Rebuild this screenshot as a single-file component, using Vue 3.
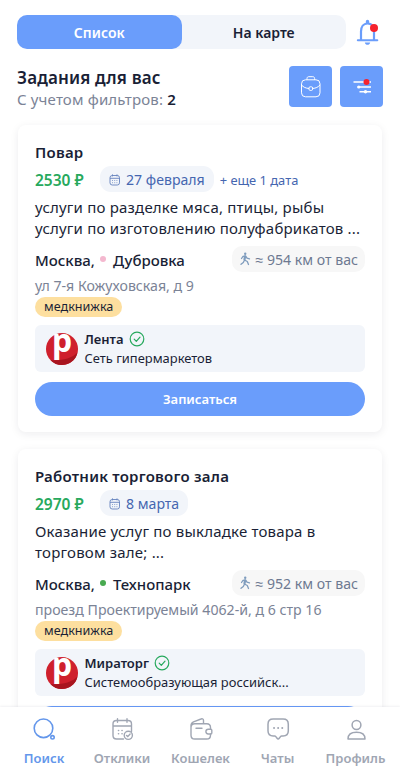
<script setup>
const jobs = [
  {
    title: 'Повар', pay: '2530 ₽', date: '27 февраля', more: '+ еще 1 дата',
    lines: ['услуги по разделке мяса, птицы, рыбы', 'услуги по изготовлению полуфабрикатов ...'],
    metro: 'Дубровка', line: 'pink', distance: '≈ 954 км от вас', address: 'ул 7-я Кожуховская, д 9',
    company: 'Лента', about: 'Сеть гипермаркетов',
  },
  {
    title: 'Работник торгового зала', pay: '2970 ₽', date: '8 марта', more: '',
    lines: ['Оказание услуг по выкладке товара в', 'торговом зале; ...'],
    metro: 'Технопарк', line: 'green', distance: '≈ 952 км от вас', address: 'проезд Проектируемый 4062-й, д 6 стр 16',
    company: 'Мираторг', about: 'Системообразующая российск...',
  },
]
</script>

<template>
  <div class="screen">
    <header class="top">
      <div class="switch">
        <button class="seg on">Список</button>
        <button class="seg">На карте</button>
      </div>
      <svg class="bell" width="24" height="28" viewBox="0 0 24 28" fill="none">
        <path d="M5 21V12.500C5 7.500 7.500 4.500 11.500 4.500S18 7.500 18 12.500V21" stroke="#6a9dfb" stroke-width="2.200" />
        <path d="M1.800 21.300H21.300" stroke="#6a9dfb" stroke-width="2" stroke-linecap="round" />
        <path d="M9.800 4.500V2.500a1.700 1.700 0 0 1 3.400 0V4.500zM8.800 23.500h5.400c-.3 1.400-1.400 2.300-2.700 2.300s-2.400-.9-2.700-2.300z" fill="#6a9dfb" />
        <circle cx="18" cy="9" r="4" fill="#f5222d" />
      </svg>
    </header>

    <section class="head">
      <div class="headings">
        <h1>Задания для вас</h1>
        <p>С учетом фильтров: <b>2</b></p>
      </div>
      <button class="tool">
        <svg width="22" height="24" viewBox="0 0 22 24" fill="none" stroke="#fff" stroke-width="1">
          <rect x="1.500" y="4.800" width="18.500" height="17" rx="4" />
          <path d="M7 4.800V3.500C7 2.300 7.700 1.700 8.800 1.700h4c1.100 0 1.800.6 1.800 1.800V4.800M1.500 10c2 2.200 4 3.200 7.500 3.500M20 10c-2 2.200-4 3.200-7.500 3.500" />
          <rect x="9" y="11.800" width="3.600" height="3.600" rx="1.200" />
        </svg>
      </button>
      <button class="tool">
        <svg width="20" height="20" viewBox="0 0 20 20" fill="none">
          <path d="M1.500 5H19M5.500 10H19M7.500 14.700H19" stroke="#fff" stroke-width="1.500" />
          <circle cx="6.800" cy="10" r="1.600" fill="#fff" />
          <circle cx="13.500" cy="14.700" r="1.700" fill="#fff" />
          <circle cx="14.500" cy="4.900" r="3" fill="#f5222d" />
        </svg>
      </button>
    </section>

    <main class="list">
      <article v-for="job in jobs" :key="job.title" class="card">
        <h2>{{ job.title }}</h2>
        <div class="payrow">
          <span class="pay">{{ job.pay }}</span>
          <span class="date">
            <svg width="12" height="12" viewBox="0 0 12 12" fill="none" stroke="#6482bd" stroke-width=".9">
              <rect x="1" y="1.500" width="9.500" height="9.500" rx="2.200" />
              <path d="M1 4.300h9.500M3.500.4v2M8 .4v2" />
              <path d="M3 6.500h6M3 8.700h6" stroke-width=".7" stroke-dasharray="1 1.200" />
            </svg>
            {{ job.date }}
          </span>
          <span v-if="job.more" class="more">{{ job.more }}</span>
        </div>
        <div class="desc"><p v-for="l in job.lines" :key="l">{{ l }}</p></div>
        <div class="place">
          <span class="city">Москва,</span><i class="dot" :class="job.line"></i><span class="city">{{ job.metro }}</span>
          <span class="dist">
            <svg width="11" height="14" viewBox="0 0 11 14" fill="none" stroke="#7f9cbd" stroke-width="1.300" stroke-linecap="round" stroke-linejoin="round">
              <circle cx="5.200" cy="1.700" r="1.200" fill="#7f9cbd" stroke="none" />
              <path d="M1.500 6.500 3 4.300 5.700 4 7 6.200l2.500.6M5.500 4.300 4.500 8l2.800 1.500 1.200 3M4.300 8.500 3.300 10.500 1 12.300" />
              <path d="M4.900 4.500 4.400 7.500" stroke-width="2" />
            </svg>
            {{ job.distance }}
          </span>
        </div>
        <p class="address">{{ job.address }}</p>
        <span class="tag">медкнижка</span>
        <div class="company">
          <svg class="logo" width="32" height="32" viewBox="0 0 32 32">
            <circle cx="16" cy="16" r="16" fill="#cf202d" />
            <path d="M4.500 27.200C15 28 26 25.500 31.500 19.500A16 16 0 0 1 4.500 27.200z" fill="#a8151f" />
            <text x="16.200" y="19.400" text-anchor="middle" fill="#fff">p</text>
          </svg>
          <div class="info">
            <div class="name">
              <strong>{{ job.company }}</strong>
              <svg width="16" height="16" viewBox="0 0 16 16" fill="none" stroke="#27a95d" stroke-width="1.200" stroke-linecap="round" stroke-linejoin="round">
                <circle cx="8" cy="8" r="6.800" /><path d="m5.200 8.200 2.100 2.100L11 6.100" />
              </svg>
            </div>
            <div class="about">{{ job.about }}</div>
          </div>
        </div>
        <button class="apply">Записаться</button>
      </article>
    </main>

    <nav class="tabs">
      <a class="tab active">
        <svg width="26" height="26" viewBox="0 0 26 26" fill="none" stroke="#6497eb" stroke-width="1.600">
          <circle cx="12.500" cy="12.300" r="9.300" /><circle cx="21.500" cy="21.300" r="1.700" />
        </svg>
        <span>Поиск</span>
      </a>
      <a class="tab">
        <svg width="26" height="26" viewBox="0 0 26 26" fill="none" stroke="#a0a6b3" stroke-width="1.400" stroke-linecap="round">
          <path d="M14.500 23H7.500c-2.300 0-3.500-1.200-3.500-3.500V8C4 5.700 5.200 4.500 7.500 4.500h11.500c2.300 0 3.500 1.200 3.500 3.500v7.500M4 10h18.500M8.500 2.800v3.400M18 2.800v3.400" />
          <path d="M9.500 14.500h.1M13 14.500h.1M9.500 17.700h.1M13 17.700h.1" stroke-width="1.600" />
          <circle cx="19.300" cy="19.300" r="4.100" /><path d="m17.500 19.400 1.300 1.200 2.300-2.600" />
        </svg>
        <span>Отклики</span>
      </a>
      <a class="tab">
        <svg width="26" height="26" viewBox="0 0 26 26" fill="none" stroke="#a0a6b3" stroke-width="1.400" stroke-linecap="round" stroke-linejoin="round">
          <path d="M22.500 13.200v-1.700c0-2.500-1.300-3.800-3.800-3.800H6.800C4.300 7.700 3 9 3 11.500v7.700C3 21.700 4.300 23 6.800 23h11.900c2.500 0 3.800-1.300 3.800-3.800v-1.200M3 11.200V9.500c0-2 .8-3 2.500-3.700L13 3c1.500-.6 2.500.1 2.500 1.600v3M8 12.200h6" />
          <path d="M22.800 13.200h-2.500a2.400 2.400 0 0 0 0 4.800h2.500c.6 0 1-.4 1-1v-2.800c0-.6-.4-1-1-1z" />
        </svg>
        <span>Кошелек</span>
      </a>
      <a class="tab">
        <svg width="26" height="26" viewBox="0 0 26 26" fill="none" stroke="#a0a6b3" stroke-width="1.500" stroke-linecap="round" stroke-linejoin="round">
          <path d="M8.200 3h9.900c3.500 0 5.200 1.700 5.200 5.200v6.600c0 3.500-1.700 5.200-5.200 5.200h-1.400c-.5 0-.9.200-1.200.6l-1.300 1.700c-.6.800-1.500.8-2.100 0l-1.300-1.700c-.3-.4-.7-.6-1.200-.6H8.200C4.700 20 3 18.300 3 14.800V8.200C3 4.700 4.700 3 8.200 3z" />
          <path d="M9 12h.1M13.100 12h.1M17.200 12h.1" stroke-width="1.900" />
        </svg>
        <span>Чаты</span>
      </a>
      <a class="tab">
        <svg width="26" height="26" viewBox="0 0 26 26" fill="none" stroke="#a0a6b3" stroke-width="1.500" stroke-linejoin="round">
          <circle cx="13.500" cy="9" r="4.400" /><path d="M5 23c0-4 3-6.700 8.500-6.700S22 19 22 23z" />
        </svg>
        <span>Профиль</span>
      </a>
    </nav>
  </div>
</template>

<style>
body { margin: 0; background: #fff; overflow: hidden; }
</style>

<style scoped>
* { box-sizing: border-box; }
h1, h2, p { margin: 0; }
button { border: 0; padding: 0; font: inherit; }
svg { display: block; flex: none; }
.screen { width: 400px; height: 782px; overflow: hidden; display: flex; flex-direction: column; background: #fff; color: #1a1f36; font-family: "Noto Sans", sans-serif; white-space: nowrap; }
.top { display: flex; flex: none; padding: 15px 0 0 17px; height: 49px; }
.switch { width: 329px; height: 34px; display: flex; border-radius: 10px; background: #f2f5fa; }
.seg { flex: 1; border-radius: 10px; background: none; color: #1a1f36; font-size: 14px; font-weight: 600; }
.seg.on { background: #6a9dfb; color: #fff; }
.bell { margin: 4px 0 0 10px; }
.head { display: flex; flex: none; height: 66px; padding: 17px 17px 0; gap: 8px; }
.headings { flex: 1; padding-top: 1px; }
h1 { font-size: 17px; letter-spacing: .15px; line-height: 22px; font-weight: 600; }
.headings p { font-size: 15px; letter-spacing: .16px; line-height: 21px; color: #7b8396; }
.headings b { color: #1a1f36; font-weight: 600; }
.tool { width: 43px; height: 41px; border-radius: 4px; background: #6a9dfb; display: flex; align-items: center; justify-content: center; }
.list { flex: 1; min-height: 0; overflow: hidden; display: flex; flex-direction: column; gap: 17px; padding: 10px 18px 0; }
.card { flex: none; height: 307px; padding: 17px 17px 0; border-radius: 8px; background: #fff; box-shadow: 0 2px 8px rgba(20, 25, 45, .08); display: flex; flex-direction: column; align-items: flex-start; }
h2 { font-size: 15px; letter-spacing: .23px; line-height: 21px; font-weight: 600; }
.payrow { display: flex; align-items: center; height: 26px; margin-top: 3px; }
.pay { width: 64.500px; padding-top: 1px; font-size: 15.500px; font-weight: 600; color: #27a95d; }
.date { height: 26px; display: flex; align-items: center; gap: 5px; padding: 1px 9px 0 9.500px; border-radius: 11px; background: #f2f5fa; color: #4566b0; font-size: 14.100px; }
.more { margin-left: 6px; padding-top: 1px; font-size: 12.900px; color: #4566b0; }
.desc { margin-top: 5px; font-size: 15px; letter-spacing: .2px; line-height: 20.500px; }
.place { width: 100%; height: 26px; margin-top: 8px; display: flex; align-items: center; font-size: 15px; font-weight: 500; }
.city { padding-top: 1px; }
.dot { width: 6px; height: 6px; margin: 0 7px 0 5px; border-radius: 50%; }
.dot.pink { background: #f4b8cf; }
.dot.green { background: #48aa50; }
.dist { height: 26px; margin-left: auto; padding: 0 7px 0 8px; border-radius: 10px; background: #f7f7f7; display: flex; align-items: center; gap: 5px; font-size: 14.100px; font-weight: 400; color: #6d7991; }
.address { margin-top: 2.500px; font-size: 14.150px; line-height: 21px; color: #7b8396; }
.tag { height: 20px; margin-top: 1.500px; padding: 0 9px; border-radius: 10px; background: #fddf9f; font-size: 12.600px; line-height: 20px; }
.company { width: 100%; height: 47px; margin-top: 8px; padding: 0 11px; border-radius: 6px; background: #f2f5fa; display: flex; align-items: center; gap: 6.500px; }
.logo { overflow: visible; font-size: 32px; font-weight: 700; }
.info { line-height: 19px; }
.name { display: flex; align-items: center; gap: 5px; font-size: 13px; }
.name strong { font-weight: 600; }
.about { font-size: 12.930px; }
.apply { width: 100%; height: 34px; margin-top: 9.500px; border-radius: 17px; background: #6a9dfb; color: #fff; font-size: 13px; font-weight: 600; }
.tabs { flex: none; height: 75px; display: grid; grid-template-columns: 84px 72px 85px 69px 87px; padding: 9px 0 0 2px; background: #fff; box-shadow: 0 -1px 2px rgba(20, 25, 45, .06); position: relative; }
.tab { display: flex; flex-direction: column; align-items: center; gap: 6px; color: #a0a6b3; font-size: 13px; line-height: 20px; font-weight: 600; }
.tab.active { color: #6497eb; }
</style>
